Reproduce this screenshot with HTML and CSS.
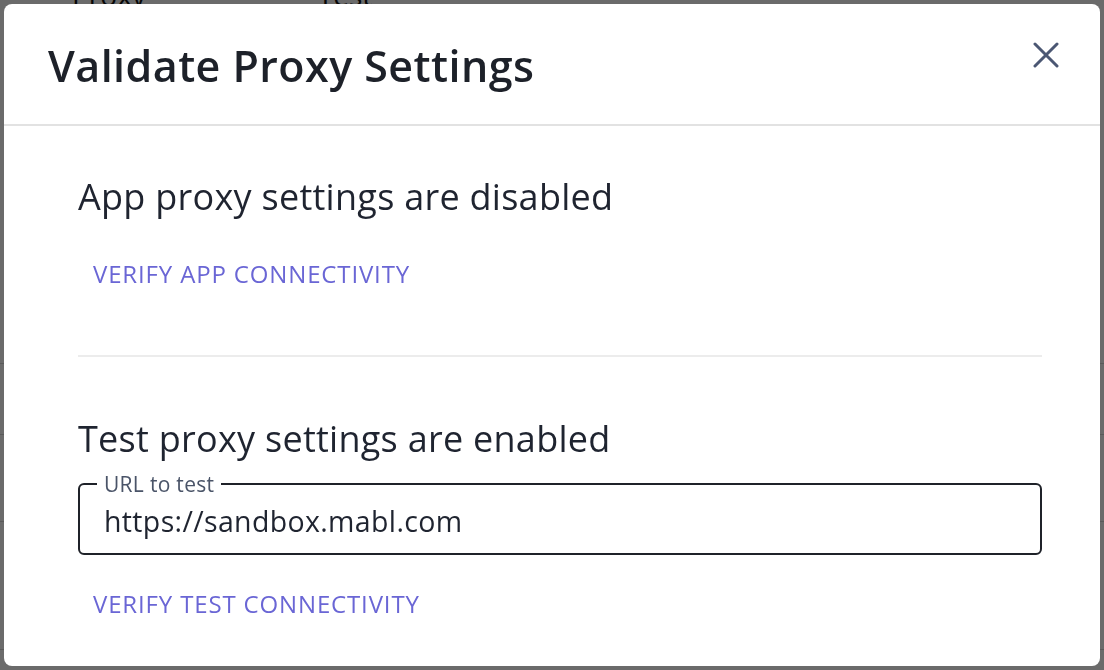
FILE: index.html
```html
<!DOCTYPE html>
<html lang="en">
<head>
<meta charset="utf-8">
<title>Validate Proxy Settings</title>
<link rel="stylesheet" href="styles.css">
</head>
<body>
<div class="page">
  <div class="page-head"><span class="ph-a">Proxy</span><span class="ph-b">Test</span></div>
  <div class="page-rows">
    <div class="page-row r1"></div>
    <div class="page-row r2"></div>
    <div class="page-row r3"></div>
    <div class="page-row r4"></div>
  </div>
</div>
<div class="backdrop"></div>
<div class="dialog" role="dialog" aria-labelledby="dlg-title">
  <header class="dialog-header">
    <h2 id="dlg-title" class="dialog-title">Validate Proxy Settings</h2>
    <button class="close-btn" aria-label="Close">
      <svg width="26" height="26" viewBox="0 0 26 26" fill="none">
        <path d="M2 2 L24 24 M24 2 L2 24" stroke="#4b5773" stroke-width="3" stroke-linecap="round"/>
      </svg>
    </button>
  </header>
  <div class="dialog-body">
    <section class="section section-app">
      <h3 class="section-title">App proxy settings are disabled</h3>
      <button class="text-btn">Verify App Connectivity</button>
    </section>
    <hr class="divider">
    <section class="section section-test">
      <h3 class="section-title">Test proxy settings are enabled</h3>
      <fieldset class="field">
        <legend class="field-label">URL to test</legend>
        <input class="field-input" type="text" value="https://sandbox.mabl.com">
      </fieldset>
      <button class="text-btn btn-test">Verify Test Connectivity</button>
    </section>
  </div>
</div>
</body>
</html>
```
FILE: styles.css
```css
* { box-sizing: border-box; }

html, body {
  margin: 0;
  padding: 0;
}

body {
  width: 1104px;
  height: 670px;
  overflow: hidden;
  background: #ffffff;
  font-family: "Open Sans", "Noto Sans", sans-serif;
  color: #1f2430;
}

/* page behind the modal */
.page {
  width: 1104px;
  height: 670px;
}
.page-head {
  display: flex;
  height: 0;
  font-size: 28px;
  line-height: 0;
  color: #111;
}
.ph-a { margin-left: 72px; transform: translateY(-5px); }
.ph-b { margin-left: 172px; transform: translateY(-5px); }
.page-rows {
  display: flex;
  flex-direction: column;
}
.page-row { border-bottom: 1px solid #d6d6d6; }
.r1 { height: 364px; }
.r2 { height: 71px; }
.r3 { height: 87px; }
.r4 { height: 128px; }

.backdrop {
  position: fixed;
  inset: 0;
  background: rgba(0, 0, 0, 0.58);
}

.dialog {
  position: fixed;
  top: 4px;
  left: 4px;
  width: 1096px;
  height: 662px;
  background: #ffffff;
  border-radius: 8px;
  overflow: hidden;
  display: flex;
  flex-direction: column;
}

.dialog-header {
  height: 122px;
  padding: 34px 41px 0 44px;
  border-bottom: 2px solid #e2e2e2;
  display: flex;
  justify-content: space-between;
  align-items: flex-start;
}

.dialog-title {
  margin: 0;
  font-size: 43px;
  line-height: 56px;
  font-weight: 600;
  letter-spacing: 0.45px;
  color: #1d2129;
}

.close-btn {
  margin-top: 4px;
  padding: 0;
  width: 26px;
  height: 26px;
  border: 0;
  background: transparent;
  display: flex;
  cursor: pointer;
}

.dialog-body {
  padding: 47px 58px 0 74px;
  display: flex;
  flex-direction: column;
}

.section {
  display: flex;
  flex-direction: column;
  align-items: flex-start;
}

.section-title {
  margin: 0;
  font-size: 36px;
  line-height: 48px;
  font-weight: 400;
  letter-spacing: 0.27px;
  color: #1f2430;
}

.text-btn {
  margin-top: 35px;
  padding: 0 14px 0 15px;
  border: 0;
  background: transparent;
  font-family: "Open Sans", "Noto Sans", sans-serif;
  font-size: 24px;
  line-height: 36px;
  font-weight: 400;
  letter-spacing: 0.85px;
  text-transform: uppercase;
  color: #6a66d5;
  cursor: pointer;
}

.divider {
  margin: 63px 0 0;
  border: 0;
  height: 2px;
  background: #ececec;
  width: 964px;
}

.section-test { margin-top: 58px; }

.field {
  margin: 10px 0 0;
  width: 964px;
  padding: 0 22px 14px 24px;
  border: 2px solid #1f2229;
  border-radius: 6px;
  display: flex;
}

.field-label {
  margin-left: -7px;
  padding: 0 7px;
  font-size: 21px;
  line-height: 22px;
  letter-spacing: 0.3px;
  color: #4a5468;
}

.field-input {
  margin-top: 8px;
  width: 100%;
  height: 36px;
  padding: 0;
  border: 0;
  outline: none;
  background: transparent;
  font-family: "Open Sans", "Noto Sans", sans-serif;
  font-size: 28.5px;
  line-height: 36px;
  letter-spacing: 0.35px;
  color: #1f2430;
}

.btn-test { margin-top: 31px; }
```
